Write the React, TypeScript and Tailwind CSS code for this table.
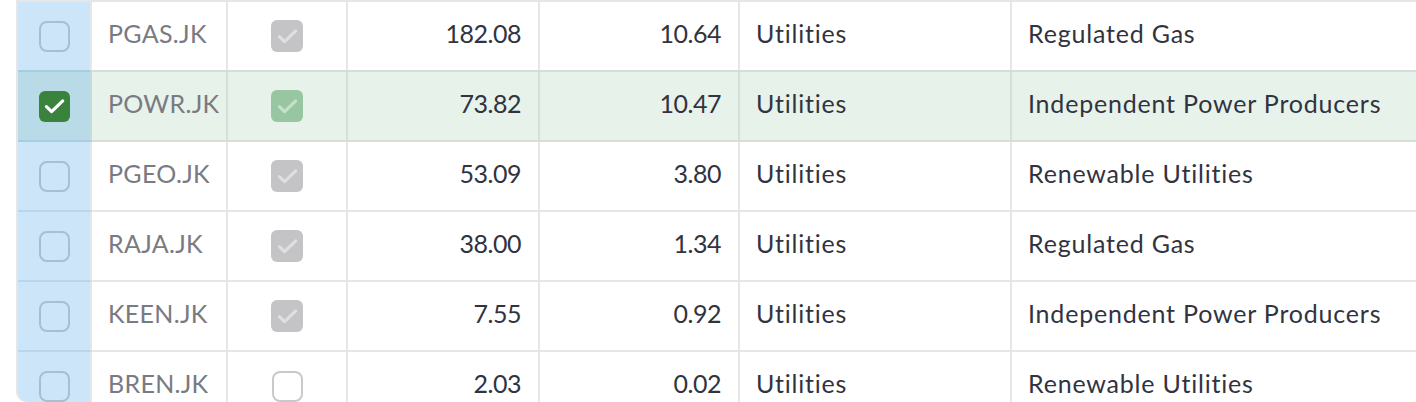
import React from "react";

type Row = { t: string; c: "on" | "off"; a: string; b: string; s: string; i: string };

const rows: Row[] = [
  { t: "PGAS.JK", c: "on", a: "182.08", b: "10.64", s: "Utilities", i: "Regulated Gas" },
  { t: "POWR.JK", c: "on", a: "73.82", b: "10.47", s: "Utilities", i: "Independent Power Producers" },
  { t: "PGEO.JK", c: "on", a: "53.09", b: "3.80", s: "Utilities", i: "Renewable Utilities" },
  { t: "RAJA.JK", c: "on", a: "38.00", b: "1.34", s: "Utilities", i: "Regulated Gas" },
  { t: "KEEN.JK", c: "on", a: "7.55", b: "0.92", s: "Utilities", i: "Independent Power Producers" },
  { t: "BREN.JK", c: "off", a: "2.03", b: "0.02", s: "Utilities", i: "Renewable Utilities" },
];

const Check = ({ color }: { color: string }) => (
  <svg width="27" height="27" viewBox="0 0 24 24" fill="none">
    <path d="M19.3 7 9.4 16.6 4.8 12.1" stroke={color} strokeWidth="2.8" strokeLinecap="round" strokeLinejoin="round" />
  </svg>
);

export default function App() {
  return (
    <div className="w-[1416px] h-[402px] bg-white overflow-hidden pl-[16px]" style={{ fontFamily: "Lato, 'Liberation Sans', sans-serif" }}>
      <div className="h-[402px] border-l-2 border-t-2 border-[#e6e6e6] rounded-bl-[10px] overflow-hidden">
        {rows.map((r, idx) => {
          const sel = idx === 1;
          const nextSel = idx === 0;
          const hb = sel || nextSel ? "border-b-[#d5dfd9]" : "border-b-[#e6e6e6]";
          const vb = sel ? "border-r-[#d5dfd9]" : "border-r-[#e6e6e6]";
          return (
            <div key={r.t} className={`flex h-[70px] border-b-2 ${hb} ${sel ? "bg-[#e7f2ea]" : "bg-white"}`}>
              <div className={`w-[74px] shrink-0 flex items-center justify-center border-r-2 ${sel ? "bg-[#b9dbe7] border-r-[#c6dbe0]" : "bg-[#cce5f8] border-r-[#e6e6e6]"} -mb-[2px] border-b-2 ${sel || nextSel ? "border-b-[#a9cde0]" : "border-b-[#b7d5ec]"}`}>
                {sel ? (
                  <div className="w-[31px] h-[31px] rounded-[6px] bg-[#3a833d] flex items-center justify-center">
                    <Check color="#ffffff" />
                  </div>
                ) : (
                  <div className="w-[31px] h-[31px] rounded-[8px] border-2 border-[#a8bfd3]" />
                )}
              </div>
              <div className={`w-[136px] shrink-0 flex items-center pl-[16px] pb-[4px] border-r-2 ${vb} text-[25px] tracking-[0.3px] text-[#7a7a82]`}>{r.t}</div>
              <div className={`w-[120px] shrink-0 flex items-center justify-center border-r-2 ${vb}`}>
                {r.c === "on" ? (
                  <div className={`w-[32px] h-[32px] rounded-[6px] flex items-center justify-center ${sel ? "bg-[#97c6a0]" : "bg-[#c4c4c7]"}`}>
                    <Check color={sel ? "#c4e2c9" : "#dfdfe1"} />
                  </div>
                ) : (
                  <div className="w-[31px] h-[31px] rounded-[8px] border-2 border-[#c9c9cc] bg-white" />
                )}
              </div>
              <div className={`w-[192px] shrink-0 flex items-center justify-end pr-[17px] pb-[4px] border-r-2 ${vb} text-[25px] tracking-[-0.5px] text-[#31333f]`}>{r.a}</div>
              <div className={`w-[200px] shrink-0 flex items-center justify-end pr-[17px] pb-[4px] border-r-2 ${vb} text-[25px] tracking-[-0.5px] text-[#31333f]`}>{r.b}</div>
              <div className={`w-[272px] shrink-0 flex items-center pl-[16px] pb-[4px] border-r-2 ${vb} text-[25px] tracking-[0.8px] text-[#31333f]`}>{r.s}</div>
              <div className="flex-1 flex items-center pl-[16px] pb-[4px] text-[25px] tracking-[0.8px] text-[#31333f] whitespace-nowrap">{r.i}</div>
            </div>
          );
        })}
      </div>
    </div>
  );
}
